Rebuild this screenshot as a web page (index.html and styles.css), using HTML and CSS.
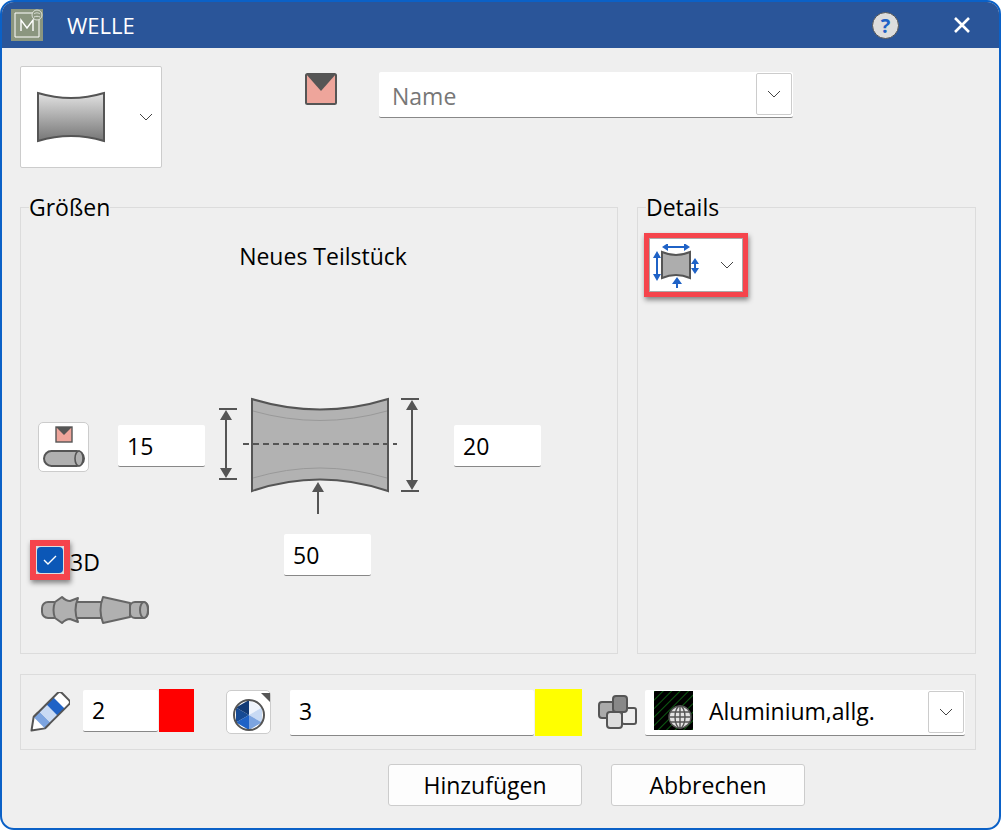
FILE: index.html
```html
<!DOCTYPE html>
<html lang="de">
<head>
  <meta charset="UTF-8" />
  <title>WELLE</title>
  <link rel="stylesheet" href="styles.css">
</head>
<body>
  <div class="window">
    <header class="titlebar">
      <svg class="app-logo" width="32" height="32" viewBox="0 0 32 32">
        <rect width="32" height="32" fill="#8b967f"/>
        <path d="M22 4H4V28H28V10" fill="none" stroke="#fff" stroke-width="1"/>
        <circle cx="26" cy="6" r="5" fill="#8b967f" stroke="#dfe3da" stroke-width="1"/>
        <path d="M23 5c2-2 5-1 6 0M23 8c2-1 4-1 6 0" fill="none" stroke="#dfe3da" stroke-width="1"/>
        <path d="M10 22V11L16 19L22 11V22" fill="none" stroke="#fff" stroke-width="1.4"/>
      </svg>
      <span class="title">WELLE</span>
      <span class="help">?</span>
      <svg class="close" width="18" height="18" viewBox="0 0 18 18">
        <path d="M2 2L16 16M16 2L2 16" stroke="#fff" stroke-width="2.6"/>
      </svg>
    </header>

    <main class="content">
      <div class="top-row">
        <div class="shape-picker">
          <svg width="70" height="52" viewBox="0 0 70 52">
            <defs>
              <linearGradient id="shapeFill" x1="0" y1="0" x2="0" y2="1">
                <stop offset="0" stop-color="#e2e2e2"/>
                <stop offset="1" stop-color="#767676"/>
              </linearGradient>
            </defs>
            <path d="M2 2Q35 12 68 2V50Q35 40 2 50Z" fill="url(#shapeFill)" stroke="#555" stroke-width="2"/>
          </svg>
          <svg class="chevron" width="14" height="8" viewBox="0 0 14 8"><path d="M1 1L7 7L13 1" fill="none" stroke="#444"/></svg>
        </div>
        <svg class="name-icon" width="32" height="32" viewBox="0 0 32 32">
          <rect x="1" y="1" width="30" height="30" rx="1.5" fill="#eea59b" stroke="#555" stroke-width="2"/>
          <path d="M1 1H31L16 18Z" fill="#555"/>
        </svg>
        <div class="combo name-combo">
          <span class="combo-text placeholder">Name</span>
          <span class="drop-btn"><svg width="14" height="8" viewBox="0 0 14 8"><path d="M1 1L7 7L13 1" fill="none" stroke="#444"/></svg></span>
        </div>
      </div>

      <div class="groups">
        <fieldset class="group sizes">
          <legend>Größen</legend>
          <div class="sizes-title">Neues Teilstück</div>
          <div class="sizes-row">
            <button class="icon-btn section-btn" type="button">
              <svg width="42" height="42" viewBox="0 0 42 42">
                <rect x="13" y="1" width="16" height="15" fill="#eea59b" stroke="#555" stroke-width="1.4"/>
                <path d="M13 1H29L21 9Z" fill="#555"/>
                <rect x="1" y="25" width="40" height="15" rx="7.5" fill="#b0b0b0" stroke="#555" stroke-width="2"/>
                <ellipse cx="36" cy="32.5" rx="4" ry="7.5" fill="#b0b0b0" stroke="#555" stroke-width="1.6"/>
              </svg>
            </button>
            <input class="field dim-left" type="text" value="15" />
            <svg class="diagram" width="210" height="123" viewBox="215 395 210 123">
              <path d="M252 399Q320 420 388 399V491Q320 468 252 491Z" fill="#b2b2b2" stroke="#555" stroke-width="2"/>
              <path d="M253 411Q320 430 387 411M253 478Q320 458 387 478" fill="none" stroke="#999"/>
              <path d="M243 444H397" stroke="#555" stroke-width="2" stroke-dasharray="6 4"/>
              <g fill="#555" stroke="#555">
                <path d="M219 409H237M219 479H237M226 412V476" fill="none" stroke-width="2"/>
                <path d="M226 410L220 420H232ZM226 478L220 468H232Z" stroke="none"/>
                <path d="M401 399H419M401 491H419M412 402V488" fill="none" stroke-width="2"/>
                <path d="M412 400L406 410H418ZM412 490L406 480H418Z" stroke="none"/>
                <path d="M318 490V514" fill="none" stroke-width="2"/>
                <path d="M318 482L312 492H324Z" stroke="none"/>
              </g>
            </svg>
            <input class="field dim-right" type="text" value="20" />
          </div>
          <div class="sizes-lower">
            <div class="lower-left">
              <label class="check-row">
                <span class="highlight check-mark">
                  <span class="check-box">
                    <svg width="14" height="10" viewBox="0 0 14 10"><path d="M1 5L5 9L13 1" fill="none" stroke="#fff" stroke-width="1.4"/></svg>
                  </span>
                </span>
                <span class="check-label">3D</span>
              </label>
              <svg class="shaft" width="110" height="30" viewBox="0 0 110 30">
                <g fill="#b0b0b0" stroke="#666" stroke-width="2" stroke-linejoin="round">
                  <rect x="2" y="7" width="18" height="16" rx="6"/>
                  <rect x="34" y="7" width="30" height="16"/>
                  <path d="M15 7L22 2Q26 6 30 6L38 3Q33 15 38 27L30 24Q26 24 22 28L15 23Q12 15 15 7Z"/>
                  <path d="M63 2L90 8V22L63 28Q58 15 63 2Z"/>
                  <rect x="90" y="7" width="18" height="16" rx="5"/>
                  <ellipse cx="104" cy="15" rx="4" ry="8"/>
                </g>
              </svg>
            </div>
            <input class="field" type="text" value="50" />
          </div>
        </fieldset>

        <fieldset class="group details">
          <legend>Details</legend>
          <div class="highlight details-picker">
            <svg class="details-icon" width="50" height="44" viewBox="652 244 50 44">
              <path d="M662 252Q676 258 690 252V278Q676 272 662 278Z" fill="#adadad" stroke="#555" stroke-width="2"/>
              <g stroke="#1f62c6" fill="#1f62c6">
                <path d="M666 247H686M657 257V276M695 262V270M677 282V288" stroke-width="2" fill="none"/>
                <path d="M662 247L668 243V251ZM690 247L684 243V251ZM657 251L653 258H661ZM657 281L653 274H661ZM695 258L691 264H699ZM695 274L691 268H699ZM677 277L672 284H682Z" stroke="none"/>
              </g>
            </svg>
            <svg class="chevron" width="14" height="8" viewBox="0 0 14 8"><path d="M1 1L7 7L13 1" fill="none" stroke="#444"/></svg>
          </div>
        </fieldset>
      </div>

      <div class="props-bar">
        <svg class="pencil" width="40" height="40" viewBox="0 0 40 40">
          <g transform="translate(1.5 38.5) rotate(-45)">
            <path d="M0 0L11 -8H17V8H11Z" fill="#fff" stroke="#555" stroke-width="2" stroke-linejoin="round"/>
            <rect x="11" y="-8" width="8" height="16" fill="#7ca4e0"/>
            <rect x="19" y="-8" width="10" height="16" fill="#c8daf4"/>
            <rect x="29" y="-8" width="10" height="16" fill="#1f62c6"/>
            <rect x="39" y="-8" width="8" height="16" fill="#fff"/>
            <path d="M11 -8H45Q48 -8 48 -5V5Q48 8 45 8H11" fill="none" stroke="#555" stroke-width="2"/>
          </g>
        </svg>
        <input class="field line-width" type="text" value="2" />
        <span class="swatch red"></span>
        <button class="icon-btn pie-btn" type="button">
          <svg width="43" height="42" viewBox="1 1 43 42">
            <path d="M35 3H45V13Z" fill="#555"/>
            <g transform="translate(23 25)">
              <path d="M0 0V-15L13 -7.5Z" fill="#eef3fb"/>
              <path d="M0 0L13 -7.5V7.5Z" fill="#c8daf4"/>
              <path d="M0 0L13 7.5L0 15Z" fill="#7ca4e0"/>
              <path d="M0 0V15L-13 7.5Z" fill="#1f62c6"/>
              <path d="M0 0L-13 7.5V-7.5Z" fill="#164a94"/>
              <path d="M0 0L-13 -7.5L0 -15Z" fill="#123a75"/>
              <circle r="15" fill="none" stroke="#555" stroke-width="2"/>
            </g>
          </svg>
        </button>
        <input class="field hatch-no" type="text" value="3" />
        <span class="swatch yellow"></span>
        <svg class="stack" width="39" height="34" viewBox="0 0 39 34">
          <rect x="1" y="7" width="21" height="16" rx="3" fill="#aaa" stroke="#555" stroke-width="2"/>
          <rect x="24" y="13" width="14" height="16" rx="2" fill="#eee" stroke="#555" stroke-width="2"/>
          <rect x="15" y="1" width="14" height="16" rx="3" fill="#888" stroke="#555" stroke-width="2"/>
          <rect x="9" y="17" width="15" height="16" rx="3" fill="#ddd" stroke="#555" stroke-width="2"/>
        </svg>
        <div class="combo material-combo">
          <svg class="hatch" width="39" height="39" viewBox="0 0 39 39">
            <defs>
              <pattern id="hatchLines" width="6" height="6" patternUnits="userSpaceOnUse" patternTransform="rotate(45)">
                <rect width="6" height="6" fill="#000"/>
                <rect width="1" height="6" fill="#0d5a12"/>
              </pattern>
            </defs>
            <rect width="39" height="39" fill="url(#hatchLines)"/>
            <g transform="translate(26 26)" fill="none" stroke="#555" stroke-width="1.4">
              <circle r="11" fill="#e4e4e4"/>
              <ellipse rx="5" ry="11"/>
              <path d="M-11 0H11M-10 -5H10M-10 5H10M0 -11V11"/>
            </g>
          </svg>
          <span class="combo-text">Aluminium,allg.</span>
          <span class="drop-btn"><svg width="14" height="8" viewBox="0 0 14 8"><path d="M1 1L7 7L13 1" fill="none" stroke="#444"/></svg></span>
        </div>
      </div>

      <div class="actions">
        <button class="action-btn" type="button">Hinzufügen</button>
        <button class="action-btn" type="button">Abbrechen</button>
      </div>
    </main>
  </div>
</body>
</html>
```

FILE: styles.css
```css
:root {
  --window-blue: #0b61c7;
  --title-blue: #2a5599;
  --panel: #efefef;
  --line: #dcdcdc;
  --icon-gray: #555;
}

* {
  box-sizing: border-box;
  font-family: 'Open Sans', 'Noto Sans', sans-serif;
}

html, body {
  margin: 0;
  background: #fff;
}

.window {
  width: 1001px;
  height: 830px;
  border: 2px solid var(--window-blue);
  border-radius: 14px;
  overflow: hidden;
  background: var(--panel);
  color: #000;
  font-size: 23px;
}

.titlebar {
  display: flex;
  align-items: center;
  height: 46px;
  padding-left: 9px;
  background: var(--title-blue);
  color: #fff;
}

.title {
  margin-left: 24px;
  font-size: 22px;
}

.help {
  display: flex;
  justify-content: center;
  align-items: center;
  width: 27px;
  height: 27px;
  margin-left: auto;
  border: 1px solid #555;
  border-radius: 50%;
  background: #ddd;
  color: #1f62c6;
  font-size: 20px;
  font-weight: 700;
}

.close {
  margin: 0 28px 0 54px;
}

.content {
  padding: 18px 23px 0 18px;
}

.top-row {
  display: flex;
  align-items: flex-start;
  height: 102px;
}

.shape-picker {
  display: flex;
  align-items: center;
  width: 142px;
  height: 102px;
  padding-left: 15px;
  background: #fff;
  border: 1px solid #ccc;
  border-radius: 2px;
}

.shape-picker .chevron {
  margin-left: 33px;
}

.name-icon {
  margin: 7px 0 0 143px;
}

.combo {
  display: flex;
  align-items: center;
  height: 46px;
  background: #fff;
  border-bottom: 1px solid #888;
  border-radius: 2px;
}

.name-combo {
  width: 414px;
  margin: 6px 0 0 42px;
  padding-left: 13px;
}

.combo-text {
  flex: 1;
}

.placeholder {
  padding-top: 3px;
  color: #777;
}

.drop-btn {
  display: flex;
  justify-content: center;
  align-items: center;
  width: 36px;
  height: 42px;
  margin: -2px 1px 0 0;
  border: 1px solid #ccc;
  border-radius: 2px;
}

.groups {
  display: flex;
  gap: 19px;
  height: 463px;
  margin-top: 23px;
}

.group {
  margin: 0;
  padding: 0 0 0 17px;
  min-width: 0;
  border: 1px solid var(--line);
}

.group legend {
  padding: 0;
  line-height: 32px;
}

.sizes {
  width: 598px;
}

.sizes legend {
  margin-left: -9px;
}

.details {
  width: 339px;
  padding-left: 6px;
}

.details legend {
  margin-left: 2px;
}

.sizes-title {
  margin: 17px 0 0 -17px;
  padding-left: 8px;
  text-align: center;
  line-height: 32px;
}

.sizes-row {
  display: flex;
  align-items: flex-start;
  margin-top: 123px;
}

.icon-btn {
  display: flex;
  justify-content: center;
  align-items: center;
  padding: 0;
  background: #fff;
  border: 1px solid #ccc;
  border-radius: 5px;
}

.section-btn {
  width: 51px;
  height: 50px;
  margin-top: 27px;
}

.field {
  width: 87px;
  height: 42px;
  padding: 0 9px;
  background: #fff;
  border: none;
  border-bottom: 1px solid #888;
  border-radius: 2px;
  color: #000;
  font-size: 23px;
  outline: none;
}

.dim-left {
  margin: 30px 10px 0 29px;
}

.dim-right {
  margin: 30px 0 0 29px;
}

.sizes-lower {
  display: flex;
  align-items: flex-start;
  margin-top: 16px;
}

.lower-left {
  width: 246px;
}

.check-row {
  display: flex;
  align-items: center;
  margin: 6px 0 0 -8px;
}

.check-label {
  padding-top: 4px;
}

.highlight {
  background: #fff;
  border: 6px solid #f5444c;
  box-shadow: 1px 3px 5px rgba(0,0,0,0.45);
}

.check-mark {
  display: flex;
  justify-content: center;
  align-items: center;
  width: 40px;
  height: 40px;
  background: #ddd;
}

.check-box {
  display: flex;
  justify-content: center;
  align-items: center;
  width: 26px;
  height: 26px;
  background: #0b57b7;
  border-radius: 4px;
}

.shaft {
  display: block;
  margin: 15px 0 0 2px;
}

.details-picker {
  display: flex;
  align-items: center;
  width: 104px;
  height: 64px;
  margin-top: 10px;
  padding-left: 2px;
  outline: 1px solid #aaa;
  outline-offset: -6px;
}

.details-icon {
  margin-top: 2px;
}

.details-picker .chevron {
  margin-left: 18px;
}

.props-bar {
  display: flex;
  align-items: flex-start;
  height: 76px;
  margin-top: 20px;
  padding: 14px 0 0 9px;
  border: 1px solid var(--line);
}

.pencil {
  margin-top: 3px;
}

.line-width {
  width: 75px;
  margin: 1px 0 0 13px;
  padding-bottom: 2px;
}

.swatch {
  display: block;
  margin-left: 1px;
}

.red {
  width: 35px;
  height: 43px;
  background: #f00;
}

.yellow {
  width: 47px;
  height: 47px;
  background: #ff0;
}

.pie-btn {
  width: 45px;
  height: 44px;
  margin: 1px 0 0 32px;
}

.hatch-no {
  width: 244px;
  height: 46px;
  margin: 1px 0 0 19px;
  padding-bottom: 4px;
}

.stack {
  margin: 6px 0 0 16px;
}

.material-combo {
  width: 320px;
  margin: 1px 0 0 8px;
  padding-left: 9px;
}

.material-combo .combo-text {
  margin-left: 16px;
  padding-bottom: 4px;
}

.hatch {
  margin-top: -4px;
}

.actions {
  display: flex;
  gap: 29px;
  margin-top: 14px;
  padding-left: 368px;
}

.action-btn {
  width: 194px;
  height: 42px;
  padding: 0;
  background: #fdfdfd;
  border: 1px solid #ccc;
  border-radius: 3px;
  color: #000;
  font-size: 23px;
}
```
